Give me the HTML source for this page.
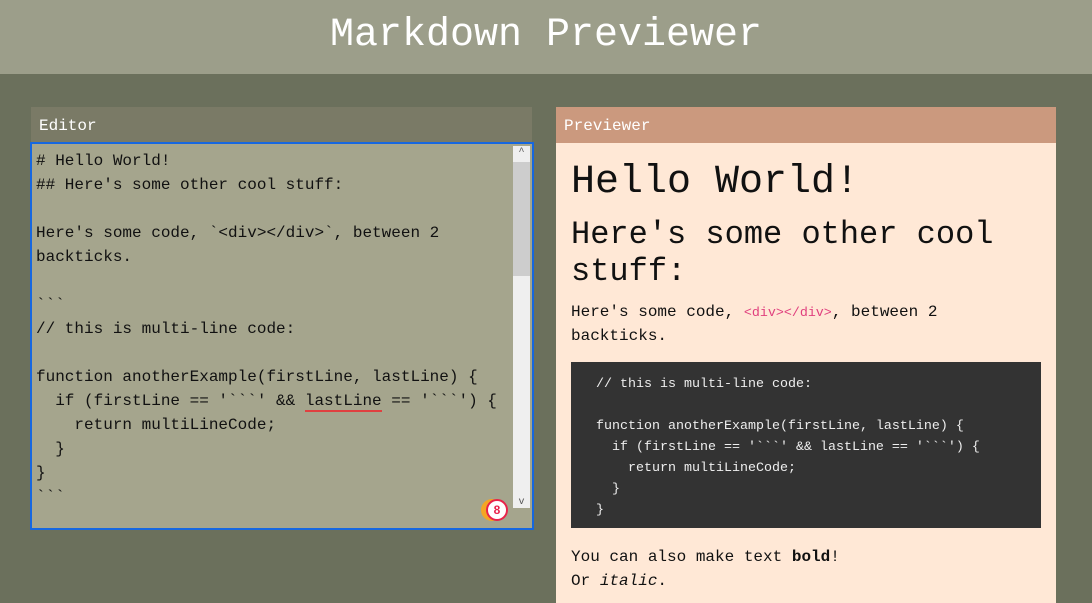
<!DOCTYPE html>
<html><head><meta charset="utf-8"><style>
*{margin:0;padding:0;box-sizing:border-box}
body{width:1092px;height:594px;overflow:hidden;background:#6b705c;font-family:"Liberation Mono","DejaVu Sans Mono",monospace;position:relative}
.hdr{position:absolute;left:0;top:0;width:1092px;height:74px;background:#9c9e8a;color:#fff;font-size:40px;text-align:center;line-height:72px}
.eh{position:absolute;left:31px;top:107px;width:501px;height:36px;background:#7a7a66;color:#fff;font-size:16px;line-height:38px;padding-left:8px}
.ta{position:absolute;left:30px;top:142px;width:504px;height:388px;border:2px solid #1667e0;background:#a5a58d;overflow:hidden}
.ta pre{font-family:inherit;font-size:16px;line-height:24px;color:#111;padding:5px 0 0 4px;white-space:pre}
.sb{position:absolute;right:2px;top:2px;width:17px;height:362px;background:#efefef}
.th{position:absolute;right:2px;top:18px;width:17px;height:114px;background:#cdcdcd}
.ph{position:absolute;left:556px;top:107px;width:500px;height:36px;background:#cb997e;color:#fff;font-size:16px;line-height:38px;padding-left:8px}
.pb{position:absolute;left:556px;top:143px;width:500px;height:460px;background:#ffe8d6;padding:0 15px;color:#111}
h1{font-weight:normal;font-size:40px;line-height:48px;margin-top:16px}
h2{font-weight:normal;font-size:32px;line-height:37px;margin-top:9px}
p{font-size:16px;line-height:24px}
code{color:#e0407e;font-size:13.33px;line-height:0}
.cb{background:#333;color:#eee;margin-top:14px;height:166px;padding:12px 25px 0;font-size:13.33px;line-height:21px;white-space:pre;font-family:inherit}
u{text-decoration:none;border-bottom:2px solid #e04040}
</style></head><body>
<div class="hdr">Markdown Previewer</div>
<div class="eh">Editor</div>
<div class="ta"><pre># Hello World!
## Here's some other cool stuff:

Here's some code, &#96;&lt;div&gt;&lt;/div&gt;&#96;, between 2
backticks.

&#96;&#96;&#96;
// this is multi-line code:

function anotherExample(firstLine, lastLine) {
  if (firstLine == '&#96;&#96;&#96;' &amp;&amp; <u>lastLine</u> == '&#96;&#96;&#96;') {
    return multiLineCode;
  }
}
&#96;&#96;&#96;</pre>
<div class="sb"><div style="text-align:center;font-size:10px;color:#555;line-height:14px">^</div><div style="position:absolute;bottom:0;width:17px;text-align:center;font-size:10px;color:#555">v</div></div>
<div class="th"></div>
<div style="position:absolute;left:449px;top:355px;width:22px;height:22px;border-radius:50%;background:#f5a623"></div>
<div style="position:absolute;left:454px;top:355px;width:22px;height:22px;border-radius:50%;background:#fff;border:2px solid #e8234a;color:#e8234a;font-size:12px;font-weight:bold;text-align:center;line-height:18px;font-family:'Liberation Sans',sans-serif">8</div>
</div>
<div class="ph">Previewer</div>
<div class="pb">
<h1>Hello World!</h1>
<h2>Here's some other cool stuff:</h2>
<p style="margin-top:10px">Here's some code, <code>&lt;div&gt;&lt;/div&gt;</code>, between 2<br>backticks.</p>
<div class="cb">// this is multi-line code:

function anotherExample(firstLine, lastLine) {
  if (firstLine == '&#96;&#96;&#96;' &amp;&amp; lastLine == '&#96;&#96;&#96;') {
    return multiLineCode;
  }
}</div>
<p style="margin-top:17px">You can also make text <b>bold</b>!<br>Or <i>italic</i>.</p>
</div>
</body></html>
